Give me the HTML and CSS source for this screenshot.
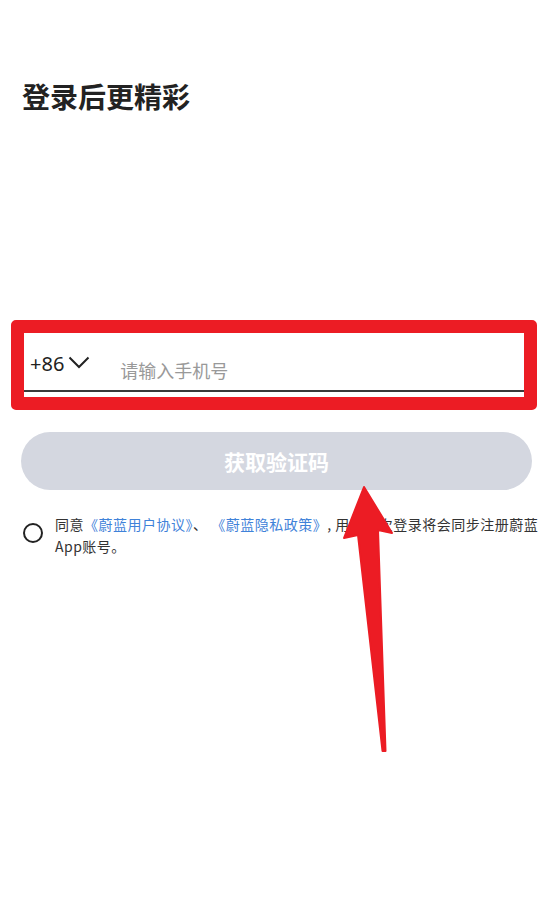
FILE: index.html
```html
<!DOCTYPE html>
<html>
<head>
<meta charset="utf-8">
<meta name="viewport" content="width=device-width, initial-scale=1">
<title>登录</title>
<link rel="stylesheet" href="styles.css">
</head>
<body>
<div class="page">

<h1 class="title">登录后更精彩</h1>

<div class="phone-box">
  <div class="phone-row">
    <div class="area">+86
      <svg class="chev" width="22" height="13" viewBox="0 0 22 13"><path d="M1.5 1.5 L11 11 L20.5 1.5" fill="none" stroke="#222" stroke-width="2"/></svg>
    </div>
    <div class="placeholder">请输入手机号</div>
  </div>
</div>

<div class="btn">获取验证码</div>

<div class="agree">
  <span class="radio"></span>
  <p class="agree-text">同意<a>《蔚蓝用户协议》</a>、 <a>《蔚蓝隐私政策》</a>, 用户首次登录将会同步注册蔚蓝App账号。</p>
</div>

<svg class="arrow" width="553" height="904" viewBox="0 0 553 904">
  <polygon points="364,487 392,533 378,530 385.5,751 382.5,751 358,535 344,538" fill="#ec1c24" stroke="#ec1c24" stroke-width="2" stroke-linejoin="round"/>
</svg>

</div>
</body>
</html>
```

FILE: styles.css
```css
body { margin: 0; background: #fff; font-family: "Noto Sans CJK SC", "Noto Sans", sans-serif; color: #222; }
.page { position: relative; width: 553px; height: 904px; overflow: hidden; }

.title { margin: 0; padding: 79px 22px 0; font-size: 28px; line-height: 34px; font-weight: 700; color: #222; }

/* red annotation frame round the phone field */
.phone-box { margin: 207px 0 0 11px; width: 500px; border: 13px solid #ec1c24; border-radius: 5px; background: #fff; }
.phone-row { display: flex; height: 57px; border-bottom: 2px solid #3a3a3a; margin-bottom: 5px; }
.area { display: flex; align-items: center; gap: 4px; padding: 17px 0 0 6px; height: 26px; font-size: 20px; color: #222; font-family: "Noto Sans", sans-serif; }
.chev { margin-top: -2px; }
.placeholder { padding: 25px 0 0 30px; font-size: 18px; line-height: 24px; color: #999; }

.btn { margin: 22px 21px 0; height: 58px; border-radius: 29px; background: #d4d7e0; color: #fff;
       font-size: 21px; font-weight: 700; display: flex; align-items: center; justify-content: center; }

.agree { display: flex; margin-top: 23px; padding: 0 12px 0 23px; }
.radio { flex: none; width: 16px; height: 16px; margin-top: 10px; border: 2.5px solid #222; border-radius: 50%; }
.agree-text { margin: 0 0 0 12px; font-size: 14px; line-height: 22px; letter-spacing: 0.5px; color: #333; }
.agree-text a { color: #3f82d9; }

.arrow { position: absolute; left: 0; top: 0; }
```
